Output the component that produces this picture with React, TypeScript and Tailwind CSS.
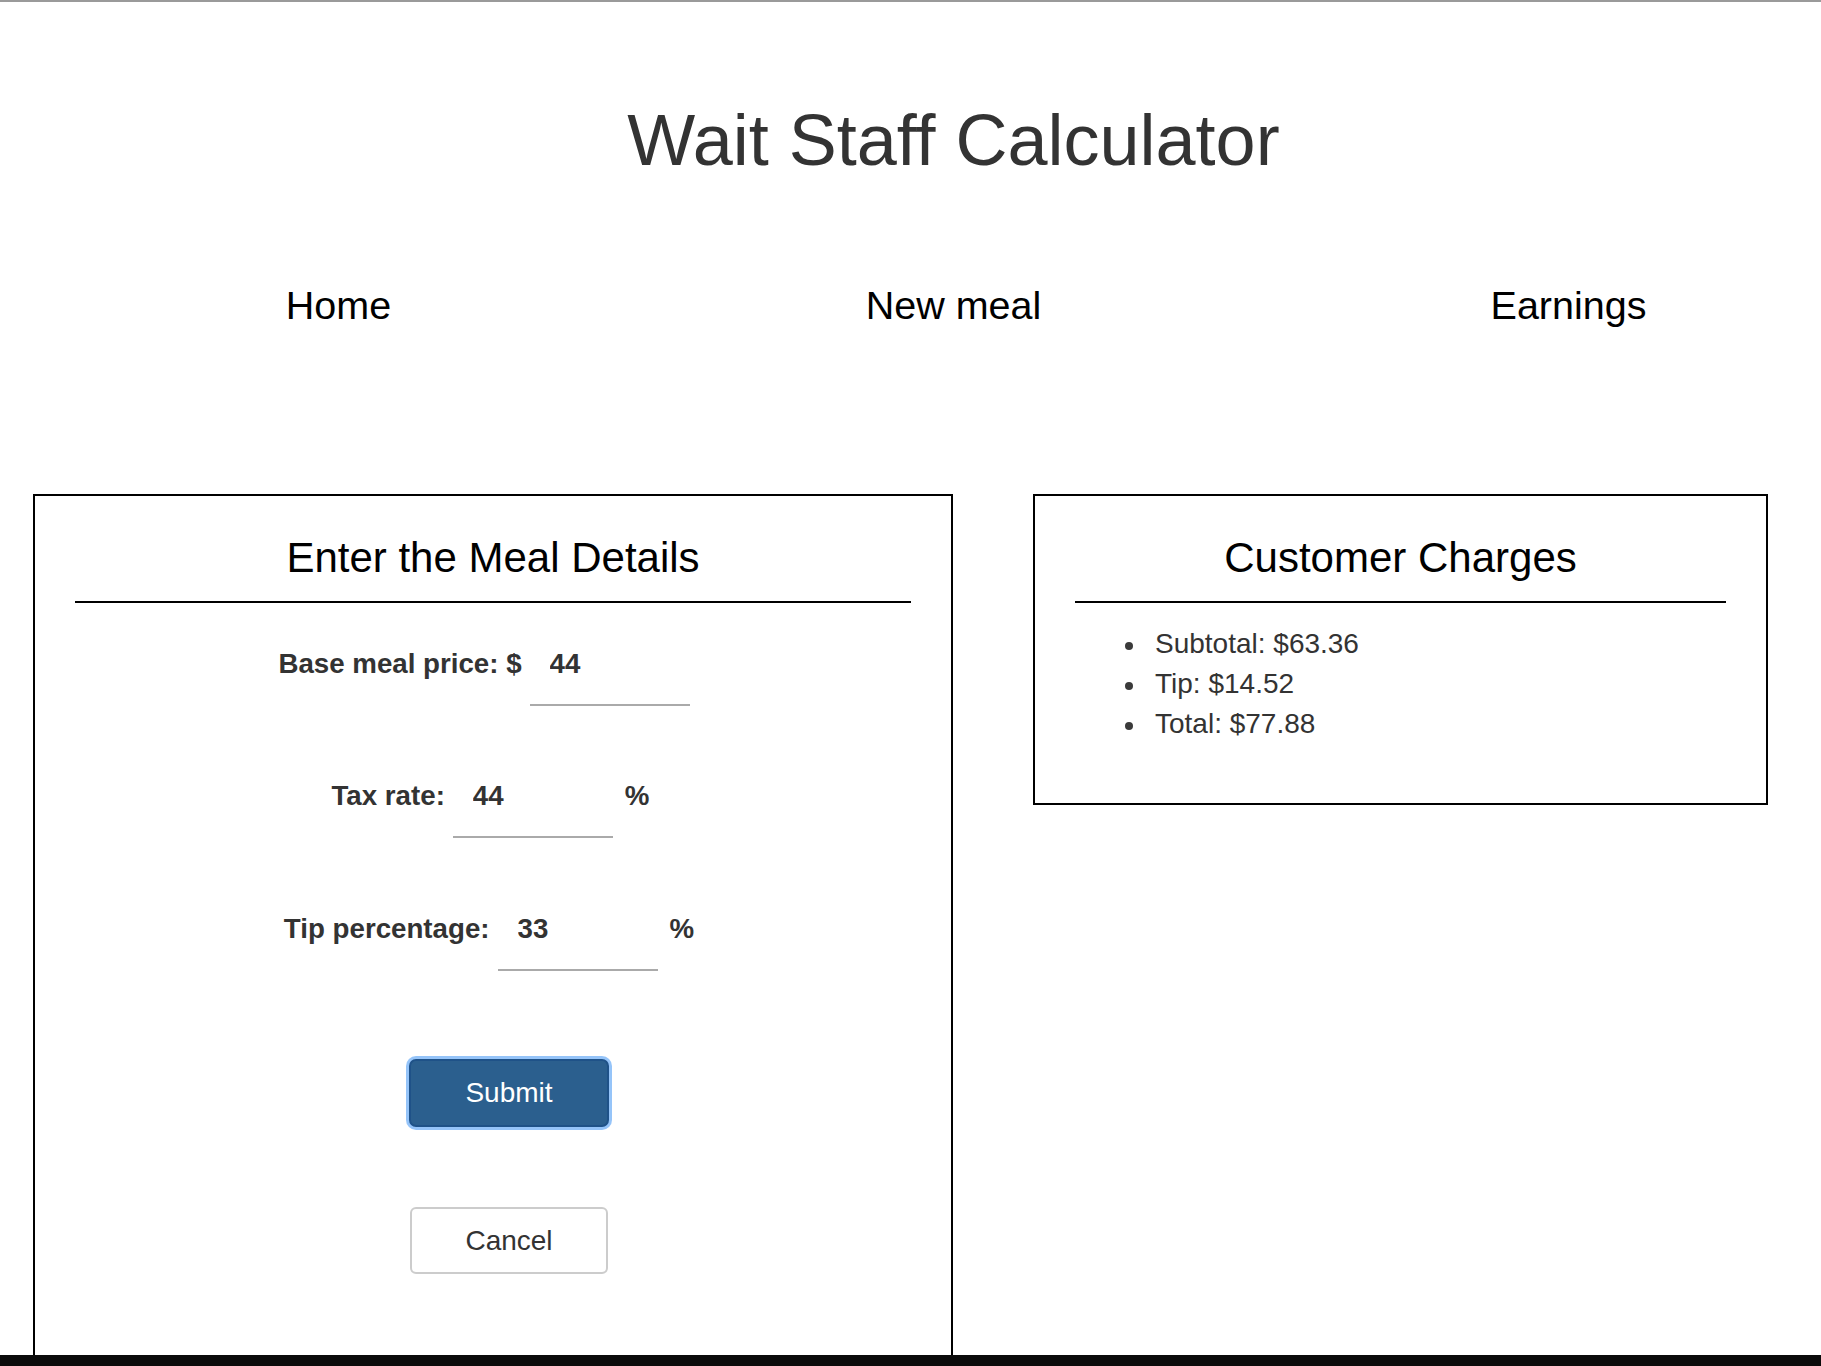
import React from "react";

function FieldRow({
  label,
  value,
  suffix,
  extraRight,
  first,
}: {
  label: string;
  value: string;
  suffix?: string;
  extraRight: string;
  first?: boolean;
}) {
  return (
    <div className={`flex justify-center items-baseline ${extraRight} ${first ? "mt-[44.5px]" : "mt-[74.5px]"}`}>
      <label className="text-[27.7px] leading-[32px] font-bold text-[#333]">{label}</label>
      <div className="ml-[8px] w-[160px] border-b-2 border-[#aaaaaa] pb-[24px]">
        <input
          readOnly
          value={value}
          className="block w-full h-[32px] pl-[20px] text-[27.7px] font-bold text-[#333] bg-transparent outline-none border-0 p-0"
        />
      </div>
      {suffix ? (
        <span className="ml-[12px] text-[27.7px] leading-[32px] font-bold text-[#333]">{suffix}</span>
      ) : null}
    </div>
  );
}

function PanelHeading({ children }: { children: React.ReactNode }) {
  return (
    <>
      <h2 className="mt-[38.5px] text-center text-[42px] leading-[46px] text-black">{children}</h2>
      <div className="mt-[20.5px] h-[2px] bg-black" />
    </>
  );
}

function Item({ children }: { children: React.ReactNode }) {
  return (
    <li className="flex items-center">
      <span className="mt-[4px] mr-[22.5px] h-[8px] w-[8px] shrink-0 rounded-full bg-[#3a3a3a]" />
      <span>{children}</span>
    </li>
  );
}

export default function App() {
  return (
    <div className="min-h-screen bg-white border-t-2 border-[#9a9a9a] overflow-hidden font-['Liberation_Sans',Arial,sans-serif]">
      <h1 className="pl-[86px] pt-[98px] text-center text-[72px] leading-[80px] text-[#333] font-normal">
        Wait Staff Calculator
      </h1>

      <nav className="mt-[103px] flex pl-[31px] text-[39.5px] leading-[44px] text-black">
        <a className="w-[615px] shrink-0 text-center">Home</a>
        <a className="w-[615px] shrink-0 text-center">New meal</a>
        <a className="w-[615px] shrink-0 text-center">Earnings</a>
      </nav>

      <div className="mt-[167px] flex items-start gap-[80px] pl-[33px]">
        <section className="w-[920px] shrink-0 border-2 border-black px-[40px] pb-[140px]">
          <PanelHeading>Enter the Meal Details</PanelHeading>
          <FieldRow first label="Base meal price: $" value="44" extraRight="pr-[18px]" />
          <FieldRow label="Tax rate:" value="44" suffix="%" extraRight="pr-[5px]" />
          <FieldRow label="Tip percentage:" value="33" suffix="%" extraRight="pr-[8px]" />
          <div className="flex flex-col items-center pl-[32px]">
            <button className="mt-[88.5px] w-[200px] h-[68px] rounded-[7px] border-2 border-[#1f5288] bg-[#2b5f8e] text-white text-[28px] shadow-[0_0_0_3px_rgba(130,186,248,0.85)]">
              Submit
            </button>
            <button className="mt-[80px] w-[198px] h-[67px] rounded-[6px] border-2 border-[#cccccc] bg-white text-[#333] text-[28px]">
              Cancel
            </button>
          </div>
        </section>

        <section className="w-[735px] shrink-0 border-2 border-black px-[40px]">
          <PanelHeading>Customer Charges</PanelHeading>
          <ul className="mt-[20.7px] mb-[59px] pl-[49.5px] list-none text-[28px] leading-[40px] text-[#333]">
            <Item>Subtotal: $63.36</Item>
            <Item>Tip: $14.52</Item>
            <Item>Total: $77.88</Item>
          </ul>
        </section>
      </div>

      <div className="fixed bottom-0 left-0 right-0 h-[11px] bg-[#0b0b0b]" />
    </div>
  );
}
